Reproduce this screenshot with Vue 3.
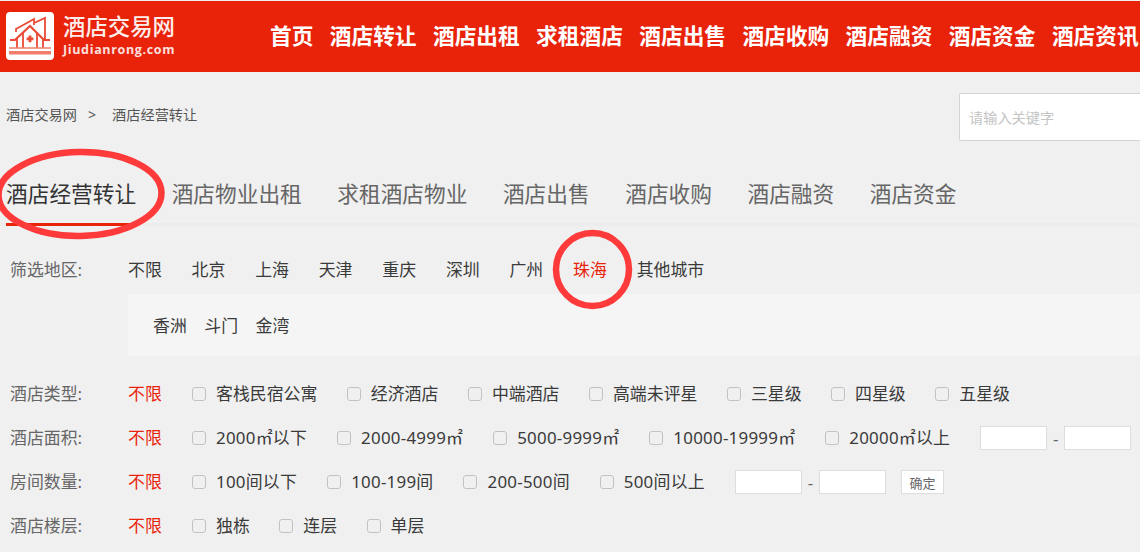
<script setup>
const navItems = ['首页', '酒店转让', '酒店出租', '求租酒店', '酒店出售', '酒店收购', '酒店融资', '酒店资金', '酒店资讯']
const tabs = ['酒店经营转让', '酒店物业出租', '求租酒店物业', '酒店出售', '酒店收购', '酒店融资', '酒店资金']
const cities = ['不限', '北京', '上海', '天津', '重庆', '深圳', '广州', '珠海', '其他城市']
const districts = ['香洲', '斗门', '金湾']
const hotelTypes = ['客栈民宿公寓', '经济酒店', '中端酒店', '高端未评星', '三星级', '四星级', '五星级']
const areas = ['2000㎡以下', '2000-4999㎡', '5000-9999㎡', '10000-19999㎡', '20000㎡以上']
const rooms = ['100间以下', '100-199间', '200-500间', '500间以上']
const floors = ['独栋', '连层', '单层']
</script>

<template>
  <div class="page">
    <header class="header">
      <div class="logo">
        <svg class="logo-icon" width="48" height="48" viewBox="0 0 48 48">
          <rect width="48" height="48" rx="4" fill="#fff" />
          <g fill="none" stroke="#ea4a35" stroke-width="1.8">
            <path d="M4 28 H9 L24 14 L38 28 H44" stroke-width="2.2" />
            <path d="M10 20 V17 L28 7 V13 M28 11 L39 6 V28" />
            <path d="M11 26 V36 M17 21 V36 M31 21 V36 M37 26 V36" />
          </g>
          <path d="M22.6 23.5 H25.4 V25.5 H27.4 V28.3 H25.4 V30.3 H22.6 V28.3 H20.6 V25.5 H22.6 Z" fill="#ea4a35" />
          <path d="M3 36 H45" stroke="#f07c6c" stroke-width="1.4" />
          <rect x="3" y="39" width="42" height="3.5" fill="#f07c6c" />
        </svg>
        <div class="logo-text">
          <div class="logo-cn">酒店交易网</div>
          <div class="logo-en">Jiudianrong.com</div>
        </div>
      </div>
      <nav class="nav">
        <a v-for="item in navItems" :key="item">{{ item }}</a>
      </nav>
    </header>

    <div class="crumb-bar">
      <div class="crumbs">
        <span>酒店交易网</span>
        <span class="sep">&gt;</span>
        <span>酒店经营转让</span>
      </div>
      <div class="search">请输入关键字</div>
    </div>

    <div class="tabs">
      <a v-for="(t, i) in tabs" :key="t" :class="{ on: i === 0 }">{{ t }}</a>
    </div>

    <div class="filters">
      <div class="row city-row">
        <span class="label">筛选地区:</span>
        <div class="cities">
          <a v-for="c in cities" :key="c" :class="{ red: c === '珠海' }">{{ c }}</a>
        </div>
      </div>
      <div class="sub-panel">
        <a v-for="d in districts" :key="d">{{ d }}</a>
      </div>

      <div class="row">
        <span class="label">酒店类型:</span>
        <a class="red any">不限</a>
        <label v-for="o in hotelTypes" :key="o" class="opt"><i class="box"></i>{{ o }}</label>
      </div>
      <div class="row num">
        <span class="label">酒店面积:</span>
        <a class="red any">不限</a>
        <label v-for="o in areas" :key="o" class="opt"><i class="box"></i>{{ o }}</label>
        <div class="range"><i class="field"></i><span>-</span><i class="field"></i></div>
      </div>
      <div class="row num">
        <span class="label">房间数量:</span>
        <a class="red any">不限</a>
        <label v-for="o in rooms" :key="o" class="opt"><i class="box"></i>{{ o }}</label>
        <div class="range"><i class="field"></i><span>-</span><i class="field"></i></div>
        <button class="ok">确定</button>
      </div>
      <div class="row">
        <span class="label">酒店楼层:</span>
        <a class="red any">不限</a>
        <label v-for="o in floors" :key="o" class="opt"><i class="box"></i>{{ o }}</label>
      </div>
    </div>

    <!-- hand drawn marks on top of the screenshot -->
    <svg class="marks" width="1140" height="552" viewBox="0 0 1140 552">
      <ellipse cx="80" cy="194" rx="81.5" ry="42" fill="none" stroke="#ff3a3a" stroke-width="6.5" transform="rotate(-1 80 194)" />
      <circle cx="592.5" cy="269.5" r="36.5" fill="none" stroke="#ff3a3a" stroke-width="6.5" />
    </svg>
  </div>
</template>

<style>
html, body {
  margin: 0;
  background: #f0f0f0;
}
</style>

<style scoped>
.page {
  position: relative;
  width: 1140px;
  height: 552px;
  overflow: hidden;
  background: #f0f0f0;
  font-family: "Noto Sans", "Noto Sans CJK SC", sans-serif;
  color: #3a3a3a;
}
.header {
  display: flex;
  align-items: center;
  height: 71px;
  margin-top: 1px;
  background: #e8230a;
  white-space: nowrap;
}
.logo {
  display: flex;
  align-items: center;
  width: 262px;
  padding-left: 6px;
  flex-shrink: 0;
  box-sizing: border-box;
}
.logo-icon {
  flex-shrink: 0;
  margin-top: -1px;
}
.logo-text {
  margin-left: 9px;
  margin-top: -3px;
  color: #fff;
}
.logo-cn {
  font-size: 22.4px;
  font-weight: 500;
  line-height: 28px;
  opacity: 0.92;
}
.logo-en {
  font-family: "Open Sans", sans-serif;
  font-size: 12.5px;
  font-weight: 700;
  line-height: 17px;
  letter-spacing: 0.65px;
  opacity: 0.85;
}
.nav {
  display: flex;
  gap: 16.4px;
  margin-left: 8px;
  margin-top: -4px;
  font-size: 21.7px;
  font-weight: 700;
  color: #fff;
}
.crumb-bar {
  display: flex;
  justify-content: space-between;
  align-items: center;
  height: 48px;
  margin-top: 21px;
  font-size: 14.2px;
  color: #555;
}
.crumbs {
  padding-left: 6px;
  margin-top: -6px;
}
.sep {
  margin: 0 16px 0 11px;
}
.search {
  width: 181px;
  height: 48px;
  box-sizing: border-box;
  padding: 14px 0 0 9px;
  background: #fff;
  border: 1px solid #d4d4d4;
  border-right: 0;
  border-radius: 2px 0 0 2px;
  font-size: 14.2px;
  line-height: 20px;
  color: #c4c4c4;
}
.tabs {
  position: relative;
  display: flex;
  gap: 35.5px;
  height: 76px;
  margin-top: 9px;
  padding: 28px 0 0 6px;
  border-bottom: 3px solid #ececec;
  box-sizing: border-box;
  font-size: 21.7px;
  line-height: 32px;
  color: #666;
}
.tabs .on {
  height: 45px;
  color: #333;
  border-bottom: 3px solid #e8230a;
}
.filters {
  font-size: 16.9px;
}
.row {
  display: flex;
  align-items: center;
  height: 44px;
  padding-left: 10px;
  white-space: nowrap;
}
.city-row {
  margin-top: 22px;
}
.label,
.any,
.opt,
.cities a {
  padding-bottom: 4px;
}
.label {
  width: 118px;
  flex-shrink: 0;
  color: #666;
}
.cities {
  display: flex;
  gap: 29.8px;
}
.red {
  color: #e8230a;
}
.sub-panel {
  display: flex;
  align-items: center;
  gap: 17.5px;
  height: 62px;
  margin: 2px 0 16px 128px;
  padding: 0 0 2px 25px;
  box-sizing: border-box;
  background: #f5f5f5;
}
.any {
  width: 64px;
  flex-shrink: 0;
}
.opt {
  display: flex;
  align-items: center;
  margin-right: 29.5px;
}
.num .opt {
  margin-right: 30px;
  letter-spacing: 0.25px;
}
.box {
  flex-shrink: 0;
  width: 14px;
  height: 14px;
  margin-top: 3px;
  margin-right: 10px;
  box-sizing: border-box;
  border: 1px solid #c2c2c2;
  border-radius: 3px;
  background: #f0f0f0;
}
.range {
  display: flex;
  align-items: center;
  color: #666;
}
.range span {
  width: 17px;
  text-align: center;
}
.field {
  display: block;
  width: 67px;
  height: 24px;
  box-sizing: border-box;
  background: #fff;
  border: 1px solid #ddd;
}
.ok {
  width: 43px;
  height: 24px;
  margin-left: 15px;
  padding: 0;
  background: #fff;
  border: 1px solid #ddd;
  font-family: inherit;
  font-size: 13px;
  color: #666;
}
.marks {
  position: absolute;
  top: 0;
  left: 0;
  pointer-events: none;
}
</style>
